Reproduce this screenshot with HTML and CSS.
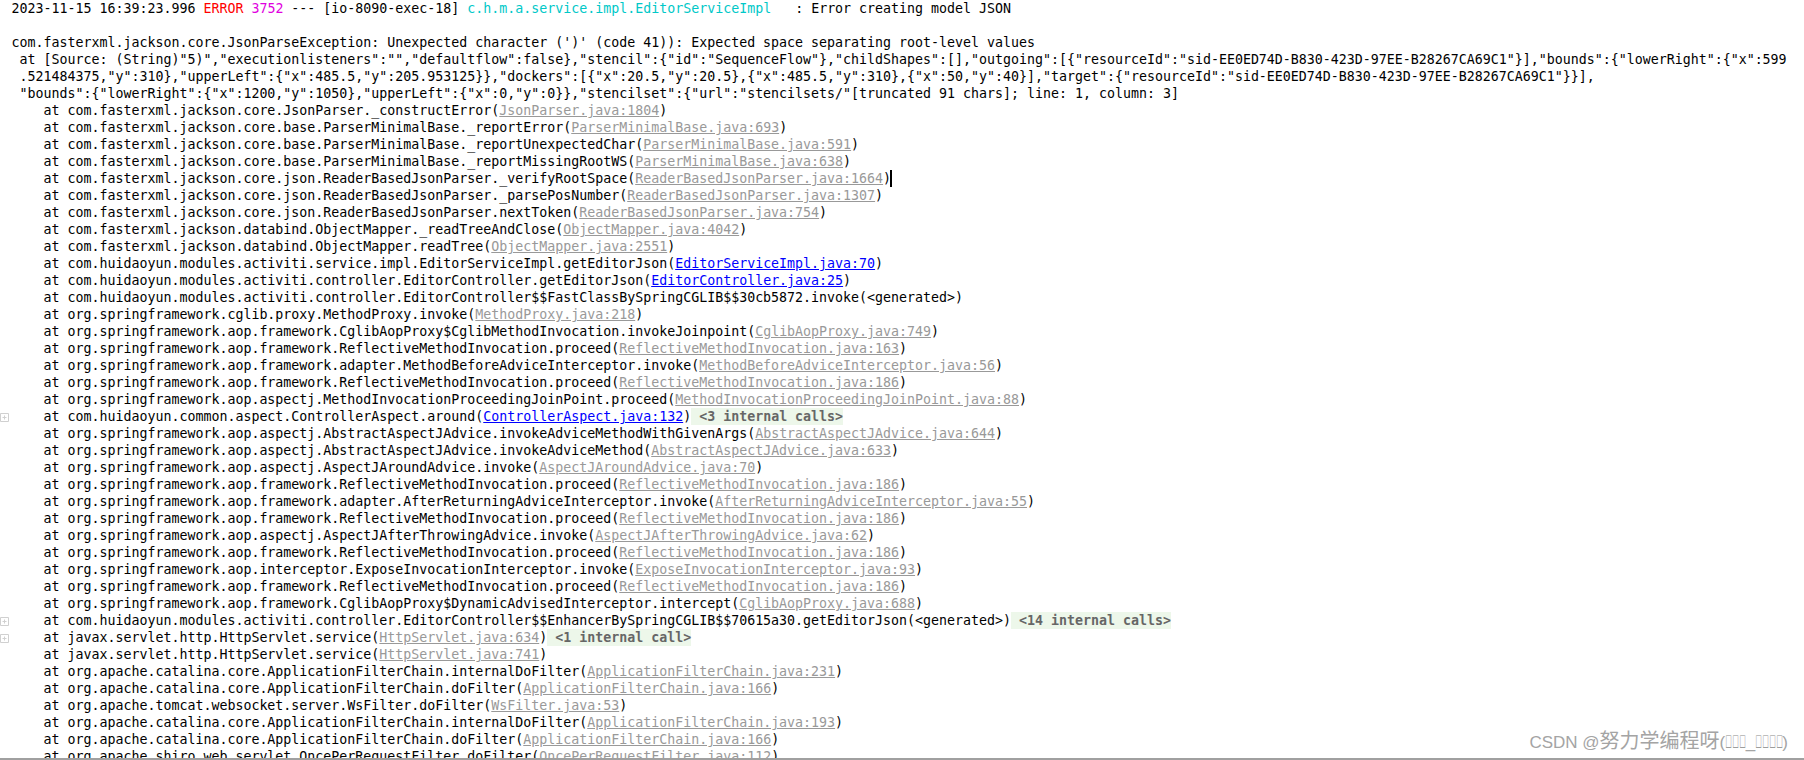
FILE: index.html
```html
<!DOCTYPE html>
<html lang="en">
<head>
<meta charset="utf-8">
<title>Console</title>
<link rel="stylesheet" href="styles.css">
</head>
<body>
<main class="console">
<div class="row"><span class="ln">2023-11-15 16:39:23.996 <span class="err">ERROR</span> <span class="pid">3752</span> --- [io-8090-exec-18] <span class="logger">c.h.m.a.service.impl.EditorServiceImpl</span>   : Error creating model JSON</span></div>
<div class="row"><span class="ln"> </span></div>
<div class="row"><span class="ln">com.fasterxml.jackson.core.JsonParseException: Unexpected character (')' (code 41)): Expected space separating root-level values</span></div>
<div class="row"><span class="ln"> at [Source: (String)"5)","executionlisteners":"","defaultflow":false},"stencil":{"id":"SequenceFlow"},"childShapes":[],"outgoing":[{"resourceId":"sid-EE0ED74D-B830-423D-97EE-B28267CA69C1"}],"bounds":{"lowerRight":{"x":599</span></div>
<div class="row"><span class="ln"> .521484375,"y":310},"upperLeft":{"x":485.5,"y":205.953125}},"dockers":[{"x":20.5,"y":20.5},{"x":485.5,"y":310},{"x":50,"y":40}],"target":{"resourceId":"sid-EE0ED74D-B830-423D-97EE-B28267CA69C1"}}],</span></div>
<div class="row"><span class="ln"> "bounds":{"lowerRight":{"x":1200,"y":1050},"upperLeft":{"x":0,"y":0}},"stencilset":{"url":"stencilsets/"[truncated 91 chars]; line: 1, column: 3]</span></div>
<div class="row"><span class="ln">    at com.fasterxml.jackson.core.JsonParser._constructError(<a class="lib">JsonParser.java:1804</a>)</span></div>
<div class="row"><span class="ln">    at com.fasterxml.jackson.core.base.ParserMinimalBase._reportError(<a class="lib">ParserMinimalBase.java:693</a>)</span></div>
<div class="row"><span class="ln">    at com.fasterxml.jackson.core.base.ParserMinimalBase._reportUnexpectedChar(<a class="lib">ParserMinimalBase.java:591</a>)</span></div>
<div class="row"><span class="ln">    at com.fasterxml.jackson.core.base.ParserMinimalBase._reportMissingRootWS(<a class="lib">ParserMinimalBase.java:638</a>)</span></div>
<div class="row"><span class="ln">    at com.fasterxml.jackson.core.json.ReaderBasedJsonParser._verifyRootSpace(<a class="lib">ReaderBasedJsonParser.java:1664</a>)<span class="caret"></span></span></div>
<div class="row"><span class="ln">    at com.fasterxml.jackson.core.json.ReaderBasedJsonParser._parsePosNumber(<a class="lib">ReaderBasedJsonParser.java:1307</a>)</span></div>
<div class="row"><span class="ln">    at com.fasterxml.jackson.core.json.ReaderBasedJsonParser.nextToken(<a class="lib">ReaderBasedJsonParser.java:754</a>)</span></div>
<div class="row"><span class="ln">    at com.fasterxml.jackson.databind.ObjectMapper._readTreeAndClose(<a class="lib">ObjectMapper.java:4042</a>)</span></div>
<div class="row"><span class="ln">    at com.fasterxml.jackson.databind.ObjectMapper.readTree(<a class="lib">ObjectMapper.java:2551</a>)</span></div>
<div class="row"><span class="ln">    at com.huidaoyun.modules.activiti.service.impl.EditorServiceImpl.getEditorJson(<a class="own">EditorServiceImpl.java:70</a>)</span></div>
<div class="row"><span class="ln">    at com.huidaoyun.modules.activiti.controller.EditorController.getEditorJson(<a class="own">EditorController.java:25</a>)</span></div>
<div class="row"><span class="ln">    at com.huidaoyun.modules.activiti.controller.EditorController$$FastClassBySpringCGLIB$$30cb5872.invoke(&lt;generated&gt;)</span></div>
<div class="row"><span class="ln">    at org.springframework.cglib.proxy.MethodProxy.invoke(<a class="lib">MethodProxy.java:218</a>)</span></div>
<div class="row"><span class="ln">    at org.springframework.aop.framework.CglibAopProxy$CglibMethodInvocation.invokeJoinpoint(<a class="lib">CglibAopProxy.java:749</a>)</span></div>
<div class="row"><span class="ln">    at org.springframework.aop.framework.ReflectiveMethodInvocation.proceed(<a class="lib">ReflectiveMethodInvocation.java:163</a>)</span></div>
<div class="row"><span class="ln">    at org.springframework.aop.framework.adapter.MethodBeforeAdviceInterceptor.invoke(<a class="lib">MethodBeforeAdviceInterceptor.java:56</a>)</span></div>
<div class="row"><span class="ln">    at org.springframework.aop.framework.ReflectiveMethodInvocation.proceed(<a class="lib">ReflectiveMethodInvocation.java:186</a>)</span></div>
<div class="row"><span class="ln">    at org.springframework.aop.aspectj.MethodInvocationProceedingJoinPoint.proceed(<a class="lib">MethodInvocationProceedingJoinPoint.java:88</a>)</span></div>
<div class="row"><svg class="fold" viewBox="0 0 9 9"><path d="M.5.5h8v8h-8zM2.5 4.5h4M4.5 2.5v4"/></svg><span class="ln">    at com.huidaoyun.common.aspect.ControllerAspect.around(<a class="own">ControllerAspect.java:132</a>)<span class="folded">&lt;3 internal calls&gt;</span></span></div>
<div class="row"><span class="ln">    at org.springframework.aop.aspectj.AbstractAspectJAdvice.invokeAdviceMethodWithGivenArgs(<a class="lib">AbstractAspectJAdvice.java:644</a>)</span></div>
<div class="row"><span class="ln">    at org.springframework.aop.aspectj.AbstractAspectJAdvice.invokeAdviceMethod(<a class="lib">AbstractAspectJAdvice.java:633</a>)</span></div>
<div class="row"><span class="ln">    at org.springframework.aop.aspectj.AspectJAroundAdvice.invoke(<a class="lib">AspectJAroundAdvice.java:70</a>)</span></div>
<div class="row"><span class="ln">    at org.springframework.aop.framework.ReflectiveMethodInvocation.proceed(<a class="lib">ReflectiveMethodInvocation.java:186</a>)</span></div>
<div class="row"><span class="ln">    at org.springframework.aop.framework.adapter.AfterReturningAdviceInterceptor.invoke(<a class="lib">AfterReturningAdviceInterceptor.java:55</a>)</span></div>
<div class="row"><span class="ln">    at org.springframework.aop.framework.ReflectiveMethodInvocation.proceed(<a class="lib">ReflectiveMethodInvocation.java:186</a>)</span></div>
<div class="row"><span class="ln">    at org.springframework.aop.aspectj.AspectJAfterThrowingAdvice.invoke(<a class="lib">AspectJAfterThrowingAdvice.java:62</a>)</span></div>
<div class="row"><span class="ln">    at org.springframework.aop.framework.ReflectiveMethodInvocation.proceed(<a class="lib">ReflectiveMethodInvocation.java:186</a>)</span></div>
<div class="row"><span class="ln">    at org.springframework.aop.interceptor.ExposeInvocationInterceptor.invoke(<a class="lib">ExposeInvocationInterceptor.java:93</a>)</span></div>
<div class="row"><span class="ln">    at org.springframework.aop.framework.ReflectiveMethodInvocation.proceed(<a class="lib">ReflectiveMethodInvocation.java:186</a>)</span></div>
<div class="row"><span class="ln">    at org.springframework.aop.framework.CglibAopProxy$DynamicAdvisedInterceptor.intercept(<a class="lib">CglibAopProxy.java:688</a>)</span></div>
<div class="row"><svg class="fold" viewBox="0 0 9 9"><path d="M.5.5h8v8h-8zM2.5 4.5h4M4.5 2.5v4"/></svg><span class="ln">    at com.huidaoyun.modules.activiti.controller.EditorController$$EnhancerBySpringCGLIB$$70615a30.getEditorJson(&lt;generated&gt;)<span class="folded">&lt;14 internal calls&gt;</span></span></div>
<div class="row"><svg class="fold" viewBox="0 0 9 9"><path d="M.5.5h8v8h-8zM2.5 4.5h4M4.5 2.5v4"/></svg><span class="ln">    at javax.servlet.http.HttpServlet.service(<a class="lib">HttpServlet.java:634</a>)<span class="folded">&lt;1 internal call&gt;</span></span></div>
<div class="row"><span class="ln">    at javax.servlet.http.HttpServlet.service(<a class="lib">HttpServlet.java:741</a>)</span></div>
<div class="row"><span class="ln">    at org.apache.catalina.core.ApplicationFilterChain.internalDoFilter(<a class="lib">ApplicationFilterChain.java:231</a>)</span></div>
<div class="row"><span class="ln">    at org.apache.catalina.core.ApplicationFilterChain.doFilter(<a class="lib">ApplicationFilterChain.java:166</a>)</span></div>
<div class="row"><span class="ln">    at org.apache.tomcat.websocket.server.WsFilter.doFilter(<a class="lib">WsFilter.java:53</a>)</span></div>
<div class="row"><span class="ln">    at org.apache.catalina.core.ApplicationFilterChain.internalDoFilter(<a class="lib">ApplicationFilterChain.java:193</a>)</span></div>
<div class="row"><span class="ln">    at org.apache.catalina.core.ApplicationFilterChain.doFilter(<a class="lib">ApplicationFilterChain.java:166</a>)</span></div>
<div class="row"><span class="ln">    at org.apache.shiro.web.servlet.OncePerRequestFilter.doFilter(<a class="lib">OncePerRequestFilter.java:112</a>)</span></div>
</main>
<div class="watermark">CSDN @<span class="cjk">努力学编程呀</span>(<span class="tofu tofu-3">&#xE000;&#xE000;&#xE000;</span>_<span class="tofu tofu-4">&#xE000;&#xE000;&#xE000;&#xE000;</span>)</div>
</body>
</html>
```
FILE: styles.css
```css
html, body {
  margin: 0;
  height: 760px;
  overflow: hidden;
  background: #fff;
}

body {
  position: relative;
}

.console {
  height: 758px;
  overflow: hidden;
  border-bottom: 2px solid #a0a0a0;
  font-family: "DejaVu Sans Mono", monospace;
  font-size: 13.29px;
  line-height: 17px;
  color: #000;
}

.row {
  position: relative;
  height: 17px;
  padding-left: 11.5px;
  white-space: pre;
}

.ln {
  display: inline-block;
  height: 17px;
}

.err { color: #ff0000; }
.pid { color: #e000e0; }
.logger { color: #00c8c8; }

.lib {
  color: #999;
  text-decoration: underline;
}

.own {
  color: #0000ff;
  text-decoration: underline;
}

.folded {
  display: inline-block;
  background: #edf7ea;
  color: #666;
  font-weight: bold;
  padding-left: 8px;
}

.caret {
  display: inline-block;
  width: 2px;
  height: 17px;
  margin-left: -1px;
  vertical-align: top;
  background: #000;
}

.fold {
  position: absolute;
  left: 0;
  top: 5px;
  width: 9px;
  height: 9px;
  fill: none;
  stroke: #d0d0d0;
  stroke-width: 1;
}

.watermark {
  position: absolute;
  right: 16px;
  top: 729px;
  font-family: "Liberation Sans", "Noto Sans CJK SC", sans-serif;
  font-size: 17px;
  line-height: 24px;
  color: #a4a4a4;
  white-space: pre;
}

.cjk {
  font-size: 20px;
}

.tofu {
  display: inline-block;
  font-size: 18px;
  color: #8a8a8a;
  transform: scaleX(0.52);
  transform-origin: left center;
  vertical-align: baseline;
}

.tofu-3 { width: 20.4px; }
.tofu-4 { width: 27.2px; }
```
